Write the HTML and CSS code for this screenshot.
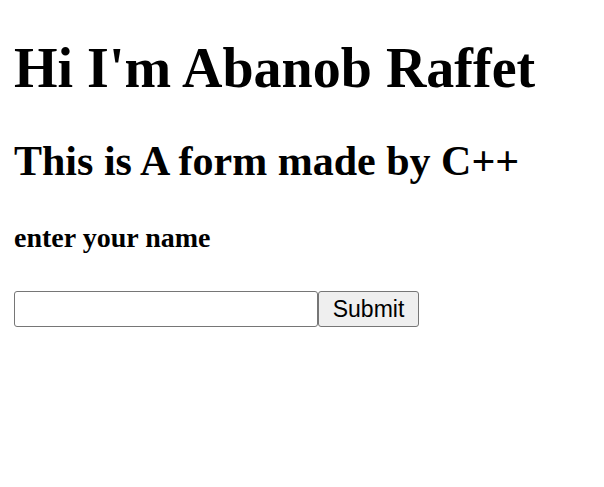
FILE: index.html
```html
<!DOCTYPE html>
<html>
<head>
<meta charset="utf-8">
<link rel="stylesheet" href="styles.css">
</head>
<body class="page">
<h1 class="title">Hi I'm Abanob Raffet</h1>
<h2 class="subtitle">This is A form made by C++</h2>
<form class="form">
<h4 class="label">enter your name</h4>
<div class="row"><input class="field" type="text"><input class="btn" type="submit" value="Submit"></div>
</form>
</body>
</html>
```

FILE: styles.css
```css
html, body { background: #fff; }
.page {
  margin: 14px;
  font-family: "Liberation Serif", "Times New Roman", serif;
  color: #000;
}
.title {
  font-size: 56px;
  margin: 21.5px 0 37.5px;
  font-weight: bold;
}
.subtitle {
  font-size: 42px;
  margin: 35px 0;
  font-weight: bold;
}
.form { margin: 0; }
.label {
  font-size: 28px;
  margin: 37px 0;
  font-weight: bold;
}
.row { display: flex; align-items: stretch; }
.field {
  box-sizing: border-box;
  width: 304px;
  height: 36px;
  margin: 0;
  border: 1.75px solid #767676;
  border-radius: 3px;
  padding: 2px 4px;
  font-size: 23px;
  background: #fff;
}
.btn {
  box-sizing: border-box;
  width: 101px;
  height: 36px;
  margin: 0;
  border: 1.75px solid #767676;
  border-radius: 3px;
  background: #efefef;
  font-family: "Liberation Sans", Arial, sans-serif;
  font-size: 23px;
  color: #000;
  padding: 0;
}
```
